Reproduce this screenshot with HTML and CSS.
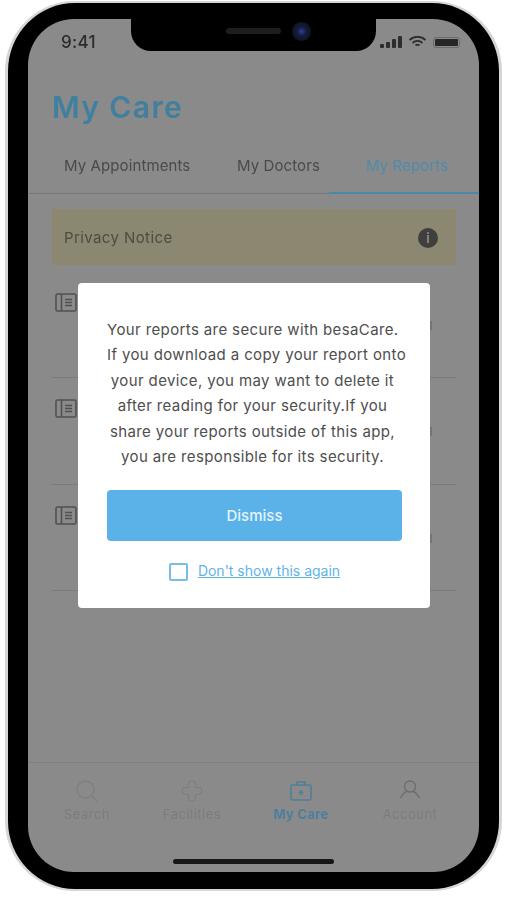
FILE: index.html
```html
<!DOCTYPE html>
<html lang="en">
<head>
<meta charset="utf-8">
<title>My Care</title>
<link rel="stylesheet" href="styles.css">
</head>
<body>
<div class="phone">
  <div class="screen">
    <div class="status">
      <span class="time">9:41</span>
      <div class="status-icons">
        <svg class="signal" width="22" height="12" viewBox="0 0 22 12"><rect x="0" y="8" width="4" height="4" rx="1"/><rect x="6" y="6" width="4" height="6" rx="1"/><rect x="12" y="3" width="4" height="9" rx="1"/><rect x="18" y="0" width="4" height="12" rx="1"/></svg>
        <svg width="19" height="12" viewBox="0 0 18 12" fill="none" stroke="#2d2d2d" stroke-width="1.800"><path d="M1 4a11.500 11.500 0 0 1 16 0"/><path d="M4 7a7 7 0 0 1 10 0"/><path d="M7 9.500a3 3 0 0 1 4 0"/></svg>
        <span class="battery"><span class="battery-fill"></span></span>
      </div>
    </div>
    <h1 class="title">My Care</h1>
    <nav class="tabs">
      <span class="tab">My Appointments</span>
      <span class="tab">My Doctors</span>
      <span class="tab tab-active">My Reports</span>
    </nav>
    <div class="content">
      <div class="notice">
        <span>Privacy Notice</span>
        <span class="info">i</span>
      </div>
      <div class="report report-first">
        <svg class="doc" width="22" height="19" viewBox="0 0 22 19" fill="none" stroke="#505050" stroke-width="1.600"><rect x="1" y="1" width="20" height="17" rx="1.500"/><path d="M6.500 1v17M10 6.500h7M10 9.500h7M10 12.500h7"/></svg>
        <span class="peek"></span>
      </div>
      <div class="report">
        <svg class="doc" width="22" height="19" viewBox="0 0 22 19" fill="none" stroke="#505050" stroke-width="1.600"><rect x="1" y="1" width="20" height="17" rx="1.500"/><path d="M6.500 1v17M10 6.500h7M10 9.500h7M10 12.500h7"/></svg>
        <span class="peek"></span>
      </div>
      <div class="report">
        <svg class="doc" width="22" height="19" viewBox="0 0 22 19" fill="none" stroke="#505050" stroke-width="1.600"><rect x="1" y="1" width="20" height="17" rx="1.500"/><path d="M6.500 1v17M10 6.500h7M10 9.500h7M10 12.500h7"/></svg>
        <span class="peek"></span>
      </div>
    </div>
    <footer class="bottom">
      <div class="nav-item">
        <svg width="24" height="22" viewBox="0 0 24 22" fill="none" stroke="#7e7e7e" stroke-width="1.300"><circle cx="10.500" cy="9.500" r="8.500"/><path d="M16.500 15.500l5.500 5.500"/></svg>
        <span>Search</span>
      </div>
      <div class="nav-item">
        <svg width="22" height="22" viewBox="0 0 22 22" fill="none" stroke="#7e7e7e" stroke-width="1.200"><path d="M7.500 4.500a3.500 3.500 0 0 1 7 0v3h3a3.500 3.500 0 0 1 0 7h-3v3a3.500 3.500 0 0 1-7 0v-3h-3a3.500 3.500 0 0 1 0-7h3z"/></svg>
        <span>Facilities</span>
      </div>
      <div class="nav-item nav-active">
        <svg width="22" height="22" viewBox="0 0 22 22" fill="none" stroke="#4d7f9b" stroke-width="1.500"><rect x="1" y="5" width="20" height="15" rx="1.500"/><path d="M7 5V2h8v3M11 10v5M8.500 12.500h5"/></svg>
        <span>My Care</span>
      </div>
      <div class="nav-item nav-account">
        <svg width="22" height="22" viewBox="0 0 22 22" fill="none" stroke="#6e6e6e" stroke-width="1.400"><circle cx="11" cy="6.500" r="5.500"/><path d="M1.500 18c2-4 4.500-6 6.500-6.500M20.500 18c-2-4-4.500-6-6.500-6.500"/></svg>
        <span>Account</span>
      </div>
    </footer>
    <div class="home-bar"></div>
    <div class="notch">
      <span class="speaker"></span>
      <span class="camera"></span>
    </div>
    <div class="modal">
      <p class="modal-text">Your reports are secure with besaCare.<br>If you download a copy your report onto<br>your device, you may want to delete it<br>after reading for your security.If you<br>share your reports outside of this app,<br>you are responsible for its security.</p>
      <button class="dismiss">Dismiss</button>
      <label class="again">
        <span class="check"></span>
        <a class="again-link">Don't show this again</a>
      </label>
    </div>
  </div>
</div>
</body>
</html>
```
FILE: styles.css
```css
* { box-sizing: border-box; }
html, body { margin: 0; height: 100%; background: #fff; }
body { width: 507px; height: 900px; padding: 1px 5px 0; font-family: "Inter", "Liberation Sans", sans-serif; overflow: hidden; }

.phone {
  width: 497px; height: 890px;
  border: 2px solid #d6d6d6;
  border-width: 2px 3px 2px 3px;
  border-radius: 70px;
  background: #000;
  padding: 16px 20px 17px 20px;
}
.screen {
  position: relative;
  width: 451px; height: 853px;
  background: #8a8a8a;
  border-radius: 46px;
  overflow: hidden;
  display: flex; flex-direction: column;
  filter: blur(0.5px);
}

.status {
  display: flex; justify-content: space-between; align-items: center;
  height: 46px; padding: 0 19px 0 33px;
  flex: none;
}
.time { font-size: 17px; font-weight: 500; color: #2c2c2c; letter-spacing: 0.3px; }
.status-icons { display: flex; align-items: center; gap: 6px; }
.signal { fill: #2d2d2d; }
.battery { display: block; width: 27px; height: 11px; border: 1px solid #6b6b6b; border-radius: 3px; padding: 1px; }
.battery-fill { display: block; width: 100%; height: 100%; background: #262626; border-radius: 1px; }

.title {
  margin: 24px 0 0 24px;
  font-size: 30px; line-height: 36px; font-weight: 600;
  letter-spacing: 1.400px;
  color: #417f9f;
  flex: none;
}
.tabs {
  position: relative;
  display: flex; flex: none;
  height: 69px; padding-top: 31px;
  border-bottom: 1px solid #767676;
  font-size: 15px; line-height: 20px; color: #4a4a4a;
  letter-spacing: 0.1px;
}
.tab { display: block; }
.tab:nth-child(1) { margin-left: 36px; width: 173px; }
.tab:nth-child(2) { width: 129px; }
.tab-active { color: #4f8bab; }
.tab-active::after {
  content: ""; position: absolute; right: 0; bottom: -1px;
  width: 150px; height: 2px; background: #4a87a8;
}

.content { flex: 1; padding: 15px 23px 0 24px; min-height: 0; }
.notice {
  height: 56px; background: #8b8770;
  display: flex; justify-content: space-between; align-items: center;
  padding: 0 18px 0 12px;
  font-size: 15px; letter-spacing: 0.4px; color: #4c4c44;
}
.info {
  width: 20px; height: 20px; border-radius: 50%;
  background: #3f3f3f; color: #8b8770;
  font-size: 13px; font-weight: 700; line-height: 20px; text-align: center;
  letter-spacing: 0; margin-top: 1px;
}
.report {
  display: flex; justify-content: space-between; align-items: flex-start;
  height: 107px; padding: 21px 24px 0 3px;
  border-bottom: 1px solid #7a7a7a;
}
.report-first { height: 113px; padding-top: 28px; }
.report:last-child { height: 106px; }
.doc { display: block; flex: none; }
.peek { width: 3px; height: 9px; margin-top: 28px; background: #757575; }

.bottom {
  flex: none; height: 64px;
  border-top: 1px solid #7f7f7f;
  display: flex;
  padding: 17px 0 0 6px;
}
.nav-item {
  display: flex; flex-direction: column; align-items: center;
  width: 106px; gap: 4px;
  font-size: 13px; line-height: 16px; letter-spacing: 0.5px; color: #7c7c7c;
}
.nav-item:nth-child(2) { width: 104px; }
.nav-active { width: 114px; color: #4c7f9c; font-weight: 700; letter-spacing: 0.3px; }
.nav-account { width: 104px; }
.nav-item svg { display: block; flex: none; }

.home-bar {
  flex: none; width: 161px; height: 5px; border-radius: 3px;
  background: #171717; margin: 33px 0 8px 145px;
}

.notch {
  position: absolute; left: 103px; top: 0;
  width: 245px; height: 32px;
  background: #000;
  border-radius: 0 0 20px 20px;
}
.speaker {
  position: absolute; left: 95px; top: 9px;
  width: 55px; height: 6px; border-radius: 3px; background: #1e1e1e;
}
.camera {
  position: absolute; left: 161px; top: 3px;
  width: 19px; height: 19px; border-radius: 50%;
  background: radial-gradient(circle, #2a3f9a 0, #141b3a 35%, #10151f 70%);
}

.modal {
  position: absolute; left: 50px; top: 264px;
  width: 352px; height: 325px;
  background: #fff; border-radius: 4px;
  padding: 34px 28px 0 29px;
  display: flex; flex-direction: column; align-items: center;
}
.modal-text {
  margin: 0; width: 100%; padding-right: 4px;
  font-size: 15px; line-height: 25.400px; color: #4e4e4e; text-align: center;
  letter-spacing: 0.38px;
  white-space: nowrap;
}
.dismiss {
  display: block; width: 295px; height: 51px; flex: none;
  margin-top: 21px;
  border: 0; border-radius: 4px;
  background: #5bb2e8; color: #e4f3fb;
  font: 500 15px "Inter", "Liberation Sans", sans-serif;
}
.again {
  display: flex; align-items: center; gap: 10px;
  margin-top: 21px;
}
.check { width: 19px; height: 18px; border: 2px solid #76bdea; border-radius: 2px; }
.again-link { font-size: 14px; padding-bottom: 3px; color: #5fb3e8; text-decoration: underline; }
```
